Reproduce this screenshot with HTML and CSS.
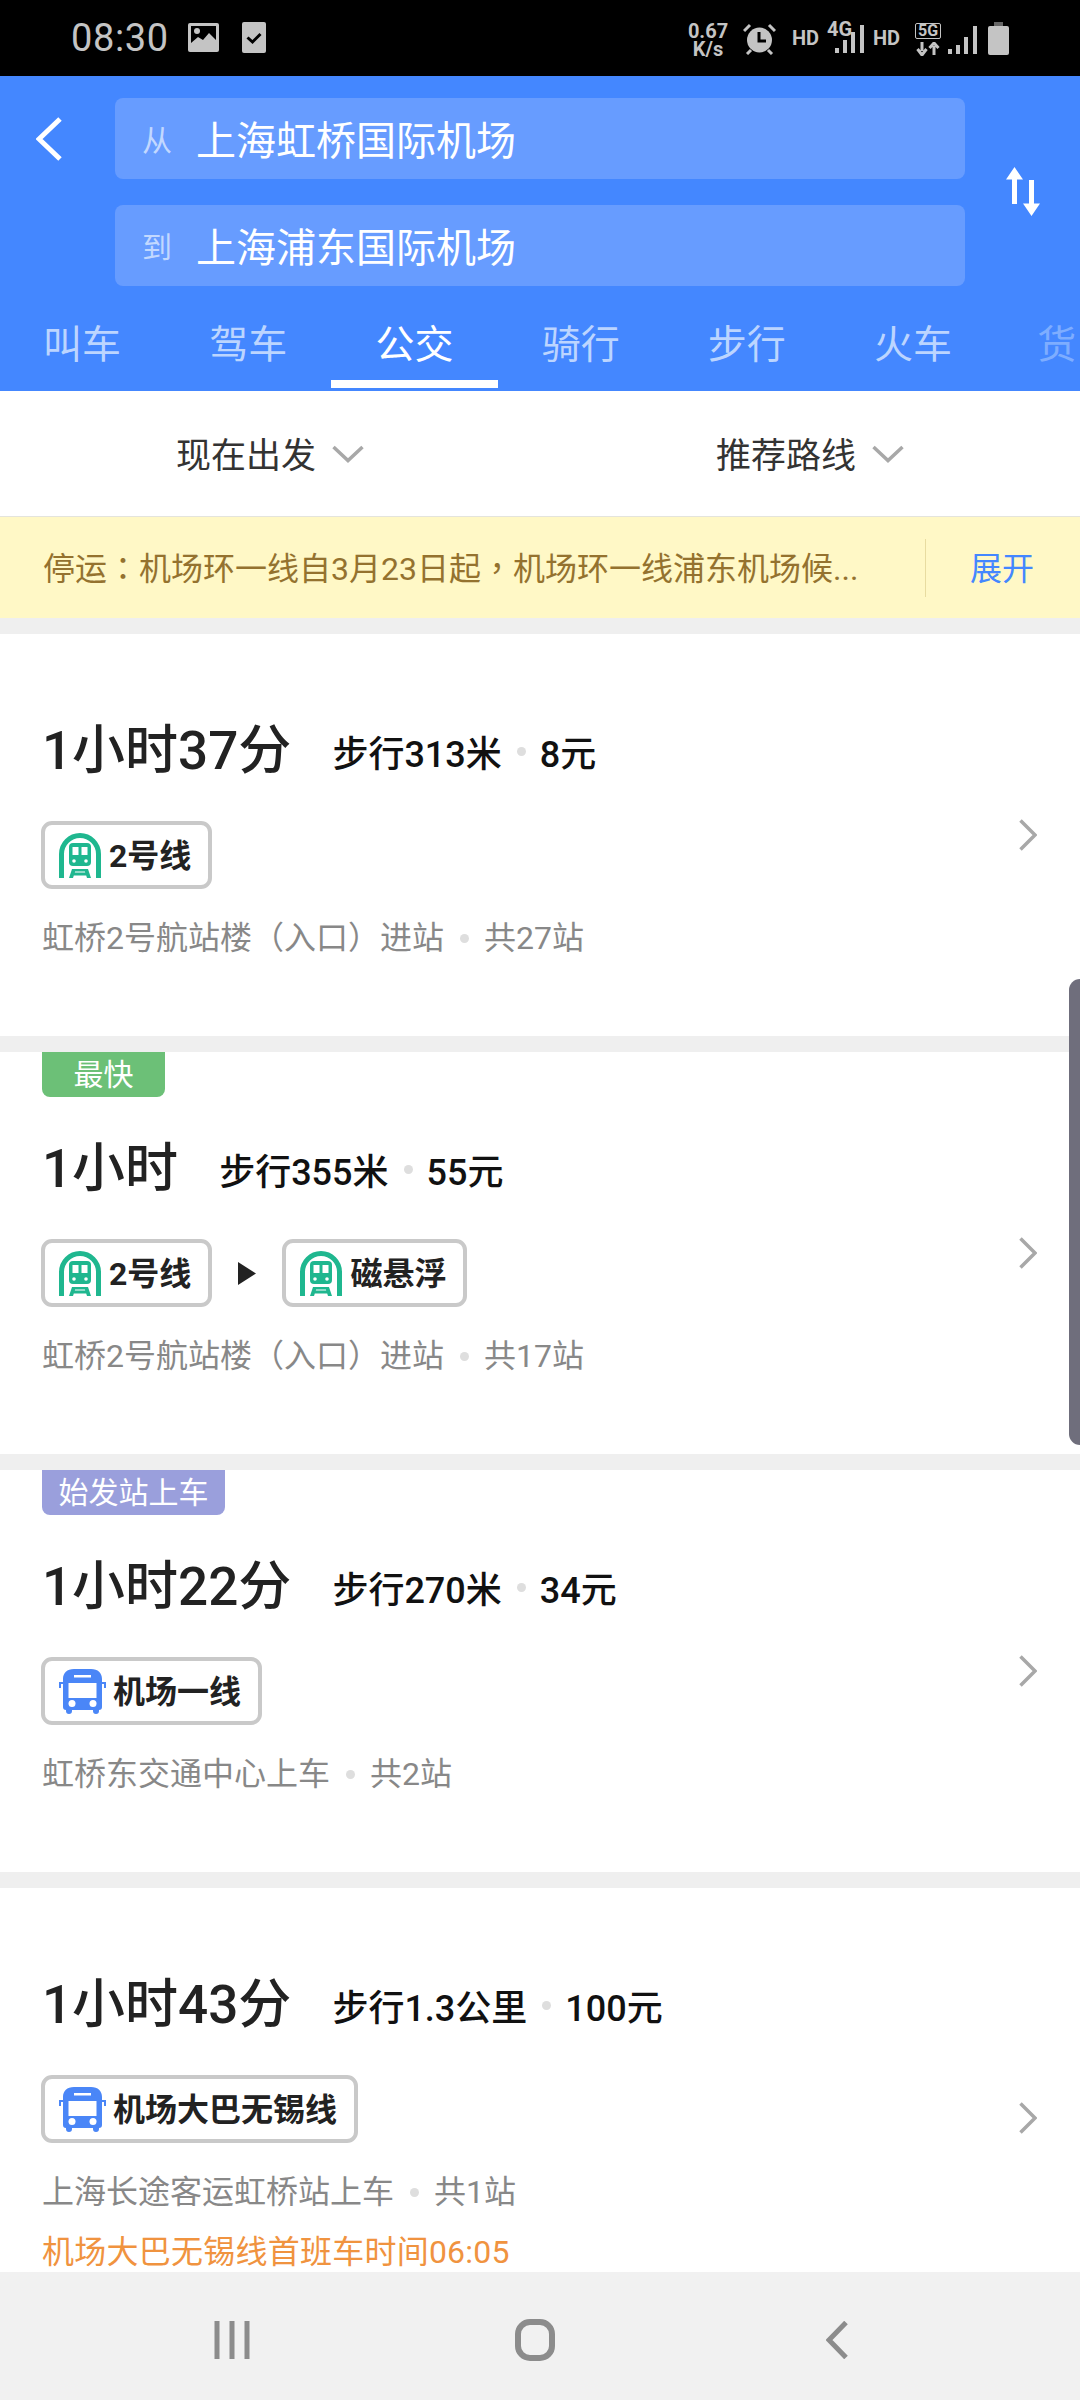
FILE: index.html
```html
<!DOCTYPE html>
<html lang="zh-CN">
<head>
<meta charset="utf-8">
<title>公交路线</title>
<link rel="stylesheet" href="styles.css">
</head>
<body>
<svg class="defs" width="0" height="0" aria-hidden="true">
  <defs>
    <symbol id="subway" viewBox="0 0 42 45">
      <path d="M2.5 45V21a18.5 18.5 0 0 1 37 0V45" fill="none" stroke="#1fb78f" stroke-width="5"/>
      <path d="M14 10h14a4 4 0 0 1 4 4v15a4 4 0 0 1-4 4H14a4 4 0 0 1-4-4V14a4 4 0 0 1 4-4z" fill="#1fb78f"/>
      <rect x="13.500" y="14" width="6" height="8" fill="#fff"/>
      <rect x="22.500" y="14" width="6" height="8" fill="#fff"/>
      <circle cx="15" cy="28" r="1.800" fill="#fff"/>
      <circle cx="27" cy="28" r="1.800" fill="#fff"/>
      <path d="M13 36h16l3 9h-4l-.8-2.500H14.800L14 45h-4zM15.800 39.500h10.400l-.3-.9H16.100z" fill="#1fb78f"/>
    </symbol>
    <symbol id="bus" viewBox="0 0 47 45">
      <path d="M15 0h17c7 0 11 4 11 10v28c0 2-1 3-3 3v1a3 3 0 0 1-6 0v-1H13v1a3 3 0 0 1-6 0v-1c-2 0-3-1-3-3V10C4 4 8 0 15 0z" fill="#4a86f7"/>
      <rect x="15" y="6" width="17" height="2.500" fill="#fff"/>
      <path d="M9.500 14h28v15h-28z" fill="#fff"/>
      <circle cx="13" cy="34.500" r="3.500" fill="#fff"/>
      <circle cx="34" cy="34.500" r="3.500" fill="#fff"/>
      <path d="M0 13h4v2H2v4H0zM47 13h-4v2h2v4h2z" fill="#4a86f7"/>
    </symbol>
    <symbol id="chev-right" viewBox="0 0 18 32">
      <path d="M1.500 1.500L16 16 1.500 30.500" fill="none" stroke="#a8a8a8" stroke-width="3.500"/>
    </symbol>
    <symbol id="chev-down" viewBox="0 0 32 18">
      <path d="M1.500 2L16 15.500 30.500 2" fill="none" stroke="#a8a8a8" stroke-width="3.500"/>
    </symbol>
  </defs>
</svg>

<div class="phone">
  <div class="status">
    <span class="clock">08:30</span>
    <svg class="st-photo" width="31" height="29" viewBox="0 0 31 29"><path d="M2 0h27a2 2 0 0 1 2 2v25a2 2 0 0 1-2 2H2a2 2 0 0 1-2-2V2a2 2 0 0 1 2-2z" fill="#c4c4c4"/><rect x="3" y="3" width="25" height="21" fill="#000"/><circle cx="9" cy="8" r="3" fill="#c4c4c4"/><path d="M3 20l7-6 5 3 6-7 7 7v7H3z" fill="#c4c4c4"/></svg>
    <svg class="st-check" width="24" height="31" viewBox="0 0 24 31"><rect width="24" height="31" rx="2" fill="#c4c4c4"/><path d="M5.500 15.500l5 4.500 8-8" fill="none" stroke="#000" stroke-width="3"/></svg>
    <div class="st-right">
      <div class="st-speed"><span>0.67</span><span>K/s</span></div>
      <svg class="st-alarm" width="33" height="32" viewBox="0 0 33 32"><circle cx="16.500" cy="17" r="12.500" fill="#c4c4c4"/><path d="M16 9v9h7" fill="none" stroke="#000" stroke-width="3"/><path d="M1 8l6-6M32 8l-6-6M4 31l4-4M29 31l-4-4" stroke="#c4c4c4" stroke-width="3"/></svg>
      <span class="st-hd">HD</span>
      <div class="st-net">
        <span class="st-4g">4G</span>
        <svg class="st-bars" width="29" height="28" viewBox="0 0 29 28"><path d="M0 28v-5h4v5zM8 28V15h4v13zM16 28V7h4v21zM25 28V0h4v28z" fill="#c4c4c4"/></svg>
      </div>
      <span class="st-hd">HD</span>
      <div class="st-5g">
        <span class="st-5gbox">5G</span>
        <svg width="24" height="14" viewBox="0 0 24 14"><path d="M6 0v9M1.500 7L6 13l4.500-6M18 13V4M13.500 6L18 1l4.500 5" fill="none" stroke="#c4c4c4" stroke-width="3"/></svg>
      </div>
      <svg class="st-bars2" width="29" height="28" viewBox="0 0 29 28"><path d="M0 28v-5h4v5zM8 28v-9h4v9zM16 28V11h4v17zM25 28V0h4v28z" fill="#c4c4c4"/></svg>
      <svg class="st-bat" width="21" height="33" viewBox="0 0 21 33"><path d="M6 0h9v4H6z" fill="#666"/><rect y="4" width="21" height="29" rx="2" fill="#c4c4c4"/></svg>
    </div>
  </div>

  <header class="head">
    <div class="search">
      <svg class="back" width="26" height="44" viewBox="0 0 26 44"><path d="M24 2L3 22l21 20" fill="none" stroke="#fff" stroke-width="5"/></svg>
      <div class="inputs">
        <div class="field"><span class="field-k">从</span><span class="field-v">上海虹桥国际机场</span></div>
        <div class="field"><span class="field-k">到</span><span class="field-v">上海浦东国际机场</span></div>
      </div>
      <svg class="swap" width="36" height="49" viewBox="0 0 36 49"><path d="M9.500 0L18 12.500h-6V37H7V12.500H1zM26.500 49L18 36.500h6V13h5v23.500h6z" fill="#fff"/></svg>
    </div>
    <nav class="tabs">
      <span class="tab">叫车</span>
      <span class="tab">驾车</span>
      <span class="tab tab-on">公交</span>
      <span class="tab">骑行</span>
      <span class="tab">步行</span>
      <span class="tab">火车</span>
      <span class="tab tab-fade">货</span>
    </nav>
  </header>

  <div class="filters">
    <div class="filter"><span>现在出发</span><svg width="32" height="18"><use href="#chev-down"/></svg></div>
    <div class="filter"><span>推荐路线</span><svg width="32" height="18"><use href="#chev-down"/></svg></div>
  </div>

  <div class="notice">
    <span class="notice-t">停运<span class="punct" lang="zh-TW">：</span>机场环一线自3月23日起<span class="punct" lang="zh-TW">，</span>机场环一线浦东机场候...</span>
    <span class="notice-more">展开</span>
  </div>

  <main class="list">
    <section class="card">
      <div class="body">
        <div class="row-title"><span class="dur">1小时37分</span><span class="walk">步行313米</span><i class="dot"></i><span class="walk">8元</span></div>
        <div class="chips">
          <span class="chip"><svg class="ic-sub"><use href="#subway"/></svg><span class="chip-t">2号线</span></span>
        </div>
        <div class="sub">虹桥2号航站楼（入口）进站<i class="dot dot-sub"></i>共27站</div>
      </div>
      <svg class="go"><use href="#chev-right"/></svg>
    </section>

    <section class="card">
      <span class="tag tag-green">最快</span>
      <div class="body">
        <div class="row-title"><span class="dur">1小时</span><span class="walk">步行355米</span><i class="dot"></i><span class="walk">55元</span></div>
        <div class="chips">
          <span class="chip"><svg class="ic-sub"><use href="#subway"/></svg><span class="chip-t">2号线</span></span>
          <svg class="next" width="18" height="23" viewBox="0 0 18 23"><path d="M0 0l18 11.500L0 23z" fill="#222"/></svg>
          <span class="chip"><svg class="ic-sub"><use href="#subway"/></svg><span class="chip-t">磁悬浮</span></span>
        </div>
        <div class="sub">虹桥2号航站楼（入口）进站<i class="dot dot-sub"></i>共17站</div>
      </div>
      <svg class="go"><use href="#chev-right"/></svg>
    </section>

    <section class="card">
      <span class="tag tag-purple">始发站上车</span>
      <div class="body">
        <div class="row-title"><span class="dur">1小时22分</span><span class="walk">步行270米</span><i class="dot"></i><span class="walk">34元</span></div>
        <div class="chips">
          <span class="chip"><svg class="ic-bus"><use href="#bus"/></svg><span class="chip-t">机场一线</span></span>
        </div>
        <div class="sub">虹桥东交通中心上车<i class="dot dot-sub"></i>共2站</div>
      </div>
      <svg class="go"><use href="#chev-right"/></svg>
    </section>

    <section class="card card-last">
      <div class="body">
        <div class="row-title"><span class="dur">1小时43分</span><span class="walk">步行1.3公里</span><i class="dot"></i><span class="walk">100元</span></div>
        <div class="chips">
          <span class="chip"><svg class="ic-bus"><use href="#bus"/></svg><span class="chip-t">机场大巴无锡线</span></span>
        </div>
        <div class="sub">上海长途客运虹桥站上车<i class="dot dot-sub"></i>共1站</div>
        <div class="warn">机场大巴无锡线首班车时间06:05</div>
      </div>
      <svg class="go"><use href="#chev-right"/></svg>
    </section>
    <div class="scrollbar"></div>
  </main>

  <footer class="sysnav">
    <svg width="36" height="38" viewBox="0 0 36 38"><path d="M3 0v38M18 0v38M33 0v38" stroke="#8c8c8c" stroke-width="5"/></svg>
    <svg width="40" height="42" viewBox="0 0 40 42"><rect x="3" y="3" width="34" height="36" rx="12" fill="none" stroke="#8c8c8c" stroke-width="6"/></svg>
    <svg width="22" height="38" viewBox="0 0 22 38"><path d="M20 1.500L3 19l17 17.500" fill="none" stroke="#8c8c8c" stroke-width="5"/></svg>
  </footer>
</div>
</body>
</html>
```

FILE: styles.css
```css
* { box-sizing: border-box; }
html, body { margin: 0; padding: 0; }
body {
  width: 1080px;
  height: 2400px;
  overflow: hidden;
  background: #fff;
  font-family: Roboto, "Noto Sans CJK SC", sans-serif;
}
.defs { position: absolute; }
.phone { width: 1080px; height: 2400px; display: flex; flex-direction: column; overflow: hidden; }

/* status bar */
.status {
  height: 76px;
  flex: none;
  background: #000;
  color: #c4c4c4;
  display: flex;
  align-items: center;
  padding-left: 71px;
}
.clock { font-size: 38px; line-height: 76px; width: 117px; letter-spacing: .6px; }
.st-photo { margin-right: 23px; margin-top: -1px; }
.st-check { margin-top: -1px; }
.st-right { margin-left: auto; margin-right: 71px; display: flex; align-items: center; height: 76px; }
.st-speed { display: flex; flex-direction: column; align-items: center; width: 44px; font-size: 20px; line-height: 18px; font-weight: 700; margin-right: 13px; margin-top: 3px; }
.st-alarm { margin-top: 2px; margin-right: 16px; }
.st-hd { font-size: 20px; font-weight: 700; width: 27px; margin-top: 0; }
.st-net { position: relative; width: 37px; height: 32px; margin-left: 8px; margin-right: 9px; margin-top: 2px; }
.st-4g { position: absolute; left: 0; top: -5px; font-size: 20px; font-weight: 700; line-height: 22px; }
.st-bars { position: absolute; right: 0; top: 2px; }
.st-5g { display: flex; flex-direction: column; align-items: center; gap: 3px; margin-left: 15px; margin-right: 7px; width: 26px; margin-top: 2px; }
.st-5gbox { border: 1.500px solid #c4c4c4; border-radius: 2px; font-size: 16px; font-weight: 700; line-height: 13px; height: 16px; width: 26px; text-align: center; }
.st-bars2 { margin-top: 4px; margin-right: 11px; }
.st-bat { margin-top: 1px; }

/* header */
.head { height: 315px; flex: none; background: #4487ff; overflow: hidden; padding-top: 22px; }
.search { display: flex; align-items: flex-start; height: 214px; }
.back { margin-left: 36px; margin-top: 19px; flex: none; }
.inputs { margin-left: 53px; width: 850px; display: flex; flex-direction: column; gap: 26px; flex: none; }
.field { height: 81px; border-radius: 8px; background: #679cff; display: flex; align-items: center; padding-left: 27px; }
.field-k { font-size: 30px; width: 54px; color: #c2d8ff; margin-top: -2px; }
.field-v { font-size: 40px; color: #fff; margin-top: -2px; }
.swap { margin-left: 40px; margin-top: 69px; flex: none; }
.tabs { display: flex; margin-left: -1px; height: 76px; }
.tab {
  flex: none;
  width: 166.200px;
  height: 76px;
  text-align: center;
  font-size: 39px;
  line-height: 54px;
  padding-top: 6px;
  color: #bcd5ff;
  white-space: nowrap;
}
.tab-on { color: #fff; border-bottom: 8px solid #fff; }
.tab-fade { color: #7eadff; text-align: left; padding-left: 41px; width: 84px; overflow: hidden; }

/* filters */
.filters { height: 125px; flex: none; display: flex; background: #fff; }
.filter { flex: 1; display: flex; align-items: center; justify-content: center; gap: 16px; font-size: 35px; color: #333; }
.filter span { margin-top: -2px; }

/* notice */
.notice {
  height: 102px;
  flex: none;
  background: #fff8c6;
  border-top: 1px solid #e4e4dc;
  display: flex;
  align-items: center;
  padding-left: 43px;
  color: #94722f;
  font-size: 32px;
  white-space: nowrap;
}
.punct { font-family: "Noto Sans CJK TC", sans-serif; }
.notice-t { width: 883px; height: 58px; line-height: 54px; border-right: 1px solid #e8dca0; flex: none; }
.notice-more { margin-left: 44px; color: #4487ff; margin-top: -4px; }

/* list */
.list { flex: 1; min-height: 0; overflow: hidden; position: relative; background: #efefef; padding-top: 16px; display: flex; flex-direction: column; gap: 16px; }
.card { flex: none; position: relative; background: #fff; display: flex; align-items: center; padding: 0 43px 0 42px; }
.body { flex: 1; padding: 84px 0 76px; }
.card-last .body { padding-bottom: 74px; }
.go { width: 18px; height: 32px; flex: none; }
.row-title { display: flex; align-items: center; height: 60px; white-space: nowrap; }
.dur { font-size: 53px; line-height: 60px; color: #222; margin-right: 41px; font-weight: 500; margin-top: 5px; }
.walk { font-size: 36px; color: #111; font-weight: 500; padding-top: 6px; }
.dot { display: block; width: 9px; height: 9px; border-radius: 50%; background: #dedede; margin: 7px 14px 0 15px; }
.chips { margin-top: 43px; margin-left: -1px; display: flex; align-items: center; }
.chip {
  height: 68px;
  border: 4px solid #c9c9c9;
  border-radius: 11px;
  display: flex;
  align-items: center;
  padding: 0 17px 0 14px;
  font-size: 32px;
  font-weight: 700;
  color: #222;
  white-space: nowrap;
}
.chip-t { margin-top: -5px; }
.ic-sub { width: 42px; height: 45px; margin-right: 8px; flex: none; }
.ic-bus { width: 47px; height: 45px; margin-right: 7px; flex: none; }
.next { margin: 0 26px; }
.sub { margin-top: 27px; height: 44px; line-height: 44px; font-size: 32px; color: #888; display: flex; align-items: center; white-space: nowrap; }
.dot-sub { margin: 0 15px 0 16px; }
.warn { margin-top: 16px; height: 44px; line-height: 44px; font-size: 32px; color: #f0933f; white-space: nowrap; letter-spacing: .24px; }
.tag { position: absolute; left: 42px; top: 0; height: 45px; line-height: 46px; padding: 0 16px; font-size: 30px; color: #fff; border-radius: 0 0 8px 8px; text-align: center; }
.tag-green { background: #6cc077; width: 123px; }
.tag-purple { background: #9a9fdc; width: 183px; padding: 0; }
.scrollbar { position: absolute; right: 0; top: 361px; width: 11px; height: 466px; background: #6f6e7c; border-radius: 11px 0 0 11px; }

/* system nav */
.sysnav { height: 128px; flex: none; background: #f1f1f1; position: relative; display: grid; grid-template-columns: 214px 36px 265px 40px 271px 22px; align-items: center; padding-top: 8px; }
.sysnav svg:nth-child(1) { grid-column: 2; }
.sysnav svg:nth-child(2) { grid-column: 4; }
.sysnav svg:nth-child(3) { grid-column: 6; }
```
